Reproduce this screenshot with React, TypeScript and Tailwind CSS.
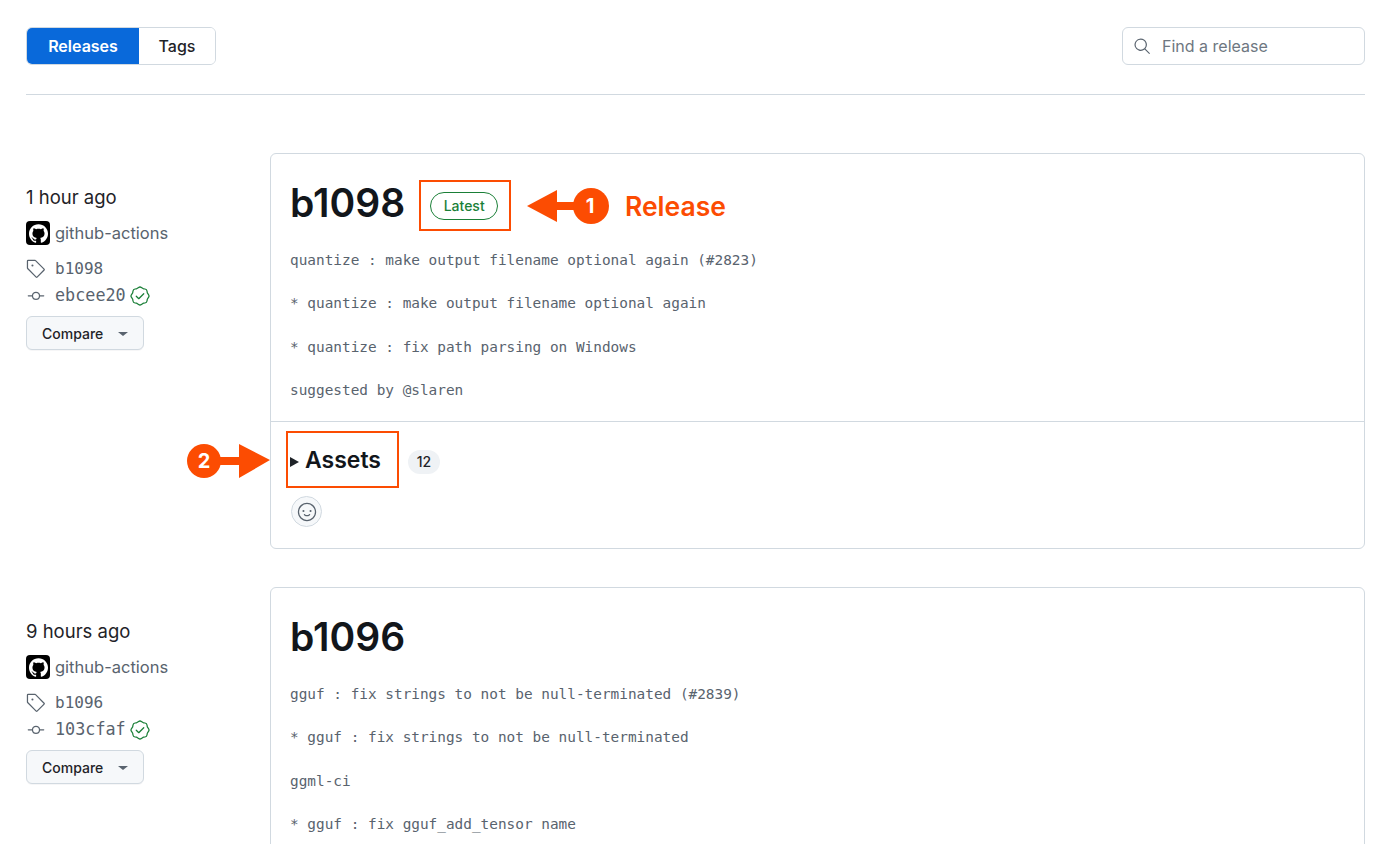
import { GoGitCommit, GoSearch, GoSmiley, GoTag, GoVerified } from 'react-icons/go';
import { SiGithub } from 'react-icons/si';

const SANS = { fontFamily: 'Inter, "Liberation Sans", sans-serif' };

function Sidebar({ time, tag, sha }: { time: string; tag: string; sha: string }) {
  return (
    <aside className="w-[244px] shrink-0 pt-[62px]">
      <p className="text-[18.5px] leading-[26px] text-[#1f2328]">{time}</p>
      <div className="mt-[11px] flex h-[24px] items-center gap-[5px]">
        <span className="flex h-[24px] w-[24px] items-center justify-center rounded-[4px] bg-black text-white">
          <SiGithub size={19} />
        </span>
        <span className="text-[16.5px] text-[#59636e]">github-actions</span>
      </div>
      <div className="mt-[13px] flex h-[22px] items-center gap-[9px] text-[#59636e]">
        <GoTag size={20} />
        <span className="font-['DejaVu_Sans_Mono',monospace] text-[16px]">{tag}</span>
      </div>
      <div className="mt-[5px] flex h-[22px] items-center gap-[9px] text-[#59636e]">
        <GoGitCommit size={20} />
        <span className="font-['DejaVu_Sans_Mono',monospace] text-[16.8px]">{sha}</span>
        <GoVerified size={20} className="-ml-[5px] text-[#1a7f37]" />
      </div>
      <button className="mt-[9px] flex h-[34px] w-[118px] items-center rounded-[6px] border border-[#d1d9e0] bg-[#f6f8fa] pl-[15px] text-[14px] font-medium text-[#1f2328] shadow-[0_1px_0_rgba(31,35,40,0.04)]">
        Compare
        <span className="ml-[15px] mt-[2px] h-0 w-0 border-x-[5px] border-t-[4px] border-x-transparent border-t-[#59636e]" />
      </button>
    </aside>
  );
}

function Notes({ lines }: { lines: string[] }) {
  return (
    <div className="mt-[22px] flex flex-col gap-[21.7px] font-['DejaVu_Sans_Mono',monospace] text-[14.4px] leading-[21.6px] text-[#59636e]">
      {lines.map((line) => (
        <p key={line}>{line}</p>
      ))}
    </div>
  );
}

export default function App() {
  return (
    <div className="h-[844px] overflow-hidden bg-white pl-[26px] pr-[35px]" style={SANS}>
      <header className="flex h-[95px] items-start justify-between border-b border-[#d1d9e0] pt-[27px]">
        <div className="flex h-[38px] overflow-hidden rounded-[6px] border border-[#d1d9e0] text-[16px] font-semibold">
          <span className="flex w-[112px] items-center justify-center bg-[#0969da] text-white">Releases</span>
          <span className="flex w-[76px] items-center justify-center bg-white font-medium text-[#1f2328]">Tags</span>
        </div>
        <div className="flex h-[38px] w-[243px] items-center gap-[11px] rounded-[6px] border border-[#d1d9e0] bg-white pl-[10px] text-[16px] text-[#6e7781]">
          <GoSearch size={18} className="text-[#59636e]" />
          Find a release
        </div>
      </header>

      <section className="mt-[27px] flex">
        <Sidebar time="1 hour ago" tag="b1098" sha="ebcee20" />
        <div className="relative mt-[31px] h-[396px] flex-1 rounded-[6px] border border-[#d1d9e0]">
          <div className="h-[267px] px-[19px] pt-[24px]">
            <div className="flex h-[50px] items-center">
              <h2 className="text-[39px] font-semibold leading-[50px] text-[#12161b]">b1098</h2>
              <span className="ml-[25px] mt-[5px] flex h-[28px] w-[68px] items-center justify-center rounded-full border border-[#1a7f37] text-[14px] font-medium text-[#1a7f37]">
                Latest
              </span>
            </div>
            <Notes
              lines={[
                'quantize : make output filename optional again (#2823)',
                '* quantize : make output filename optional again',
                '* quantize : fix path parsing on Windows',
                'suggested by @slaren',
              ]}
            />
          </div>
          <div className="border-t border-[#d1d9e0] px-[19px] pt-[22px]">
            <div className="flex h-[32px] items-center">
              <span className="mt-[3px] h-0 w-0 border-y-[5px] border-l-[9px] border-y-transparent border-l-[#1f2328]" />
              <h3 className="ml-[6px] text-[23px] font-semibold leading-[32px] text-[#12161b]">Assets</h3>
              <span className="ml-[27px] mt-[3px] flex h-[24px] w-[32px] items-center justify-center rounded-full bg-[#eff2f5] text-[14px] font-medium text-[#1f2328]">
                12
              </span>
            </div>
            <button className="ml-[1px] mt-[20px] flex h-[31px] w-[31px] items-center justify-center rounded-full border border-[#d1d9e0] bg-[#f6f8fa] text-[#59636e]">
              <GoSmiley size={20} />
            </button>
          </div>

          {/* orange annotations over the screenshot */}
          <div className="absolute left-[148px] top-[26px] h-[51px] w-[92px] border-[2px] border-[#fc4c02]" />
          <svg className="absolute left-[256px] top-[33px]" width="83" height="38" viewBox="0 0 83 38">
            <path d="M0 19 L30 3 V15 H52 V23 H30 V35 Z" fill="#fc4c02" />
            <circle cx="64" cy="19" r="18" fill="#fc4c02" />
          </svg>
          <span className="absolute left-[311px] top-[39px] flex w-[16px] justify-center text-[20px] font-bold leading-[26px] text-white">1</span>
          <span className="absolute left-[354px] top-[35px] text-[26.5px] font-semibold leading-[34px] text-[#fc4c02]">Release</span>
          <div className="absolute left-[15px] top-[277px] h-[57px] w-[113px] border-[2px] border-[#fc4c02]" />
          <svg className="absolute -left-[84px] top-[289px]" width="84" height="36" viewBox="0 0 84 36">
            <circle cx="17" cy="18" r="17" fill="#fc4c02" />
            <path d="M30 14 H52 V1 L83 17 L52 35 V22 H30 Z" fill="#fc4c02" />
          </svg>
          <span className="absolute -left-[75px] top-[294px] flex w-[16px] justify-center text-[20px] font-bold leading-[26px] text-white">2</span>
        </div>
      </section>

      <section className="flex pt-[7px]">
        <Sidebar time="9 hours ago" tag="b1096" sha="103cfaf" />
        <div className="mt-[31px] h-[400px] flex-1 rounded-[6px] border border-[#d1d9e0] px-[19px] pt-[24px]">
          <h2 className="text-[39px] font-semibold leading-[50px] text-[#12161b]">b1096</h2>
          <Notes
            lines={[
              'gguf : fix strings to not be null-terminated (#2839)',
              '* gguf : fix strings to not be null-terminated',
              'ggml-ci',
              '* gguf : fix gguf_add_tensor name',
            ]}
          />
        </div>
      </section>
    </div>
  );
}
